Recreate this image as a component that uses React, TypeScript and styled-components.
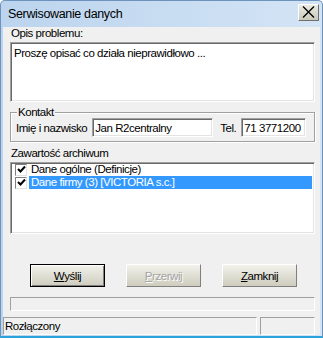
import styled, { createGlobalStyle } from 'styled-components';

const GlobalStyle = createGlobalStyle`
  html, body { margin: 0; padding: 0; background: #ffffff; }
  body {
    font-family: "Liberation Sans", Arial, sans-serif;
    font-size: 11.5px;
    letter-spacing: -0.45px;
    color: #000;
  }
`;

const Window = styled.div`
  width: 323px;
  height: 338px;
  box-sizing: border-box;
  display: flex;
  flex-direction: column;
  background: linear-gradient(to right, #bcd4ee, #d3e4f5);
  border: 1px solid #6d93bd;
  border-bottom: 2px solid #2aa3dc;
  border-radius: 5px 5px 0 0;
  padding: 0 2px 1px;
`;

const TitleBar = styled.div`
  height: 26px;
  display: flex;
  align-items: center;
  justify-content: space-between;
  padding-left: 5px;
  font-size: 12.5px;
  letter-spacing: -0.35px;
`;

const CloseButton = styled.div`
  width: 21px;
  height: 17px;
  box-sizing: border-box;
  margin-right: 1px;
  margin-top: -4px;
  display: flex;
  align-items: center;
  justify-content: center;
  background: linear-gradient(#ecebe4, #c9c8b9);
  border: 1px solid;
  border-color: #ffffff #6f6f6f #6f6f6f #ffffff;
`;

const Client = styled.div`
  flex: 1;
  background: #f0f0f0;
  display: flex;
  flex-direction: column;
  padding: 0 5px 0 7px;
`;

const Label = styled.div<{ $top?: number }>`
  line-height: 13px;
  height: 13px;
  margin-top: ${p => p.$top ?? 0}px;
  padding-left: 1px;
  white-space: nowrap;
`;

const Sunken = styled.div`
  box-sizing: border-box;
  background: #fff;
  border: 1px solid;
  border-color: #a0a0a0 #ffffff #ffffff #a0a0a0;
  box-shadow: inset 1px 1px 0 #696969, inset -1px -1px 0 #e3e3e3;
`;

const TextArea = styled(Sunken)`
  margin-top: 2px;
  height: 60px;
  padding: 4px 3px;
  line-height: 13px;
`;

const GroupBox = styled.div`
  position: relative;
  margin-top: 10px;
  height: 30px;
  box-sizing: border-box;
  border: 1px solid #a0a0a0;
  box-shadow: 1px 1px 0 #ffffff, inset 1px 1px 0 #ffffff;
  padding: 5px 0 0 5px;
`;

const Legend = styled.span`
  position: absolute;
  left: 6px;
  top: -7px;
  padding: 0 1px;
  line-height: 13px;
  background: #f0f0f0;
`;

const FieldRow = styled.div`
  display: flex;
  align-items: center;
`;

const FieldLabel = styled.span<{ $gap: number }>`
  margin-right: ${p => p.$gap}px;
  white-space: nowrap;
`;

const Input = styled(Sunken)<{ $w: number; $after?: number }>`
  width: ${p => p.$w}px;
  height: 19px;
  line-height: 15px;
  padding: 2px 2px;
  margin-right: ${p => p.$after ?? 0}px;
  white-space: nowrap;
  overflow: hidden;
`;

const ListBox = styled(Sunken)`
  margin-top: 2px;
  height: 72px;
  padding: 0 2px 0 3px;
`;

const ListRow = styled.div`
  display: flex;
  align-items: center;
  height: 13px;
`;

const CheckBox = styled.div`
  width: 12px;
  height: 12px;
  box-sizing: border-box;
  margin-left: 1px;
  background: #fff;
  border: 1px solid;
  border-color: #808080 #e3e3e3 #e3e3e3 #808080;
  display: flex;
  align-items: center;
  justify-content: center;
`;

const ItemText = styled.div<{ $selected?: boolean }>`
  flex: 1;
  margin-left: 2px;
  padding-left: 2px;
  line-height: 13px;
  height: 13px;
  white-space: nowrap;
  background: ${p => (p.$selected ? '#3399ff' : 'transparent')};
  color: ${p => (p.$selected ? '#ffffff' : '#000000')};
`;

const ButtonRow = styled.div`
  display: flex;
  gap: 21px;
  margin-top: 30px;
  padding-left: 20px;
`;

const Button = styled.div<{ $default?: boolean; $disabled?: boolean }>`
  width: 75px;
  height: 23px;
  box-sizing: border-box;
  display: flex;
  align-items: center;
  justify-content: center;
  background: linear-gradient(#f2f2ec, #cdccbd);
  border: 1px solid;
  border-color: ${p => (p.$default ? '#000000' : '#ffffff #808080 #808080 #ffffff')};
  box-shadow: ${p => (p.$default ? 'inset 1px 1px 0 #fff, inset -1px -1px 0 #808080' : 'none')};
  color: ${p => (p.$disabled ? '#a3a3a3' : '#000000')};
  text-shadow: ${p => (p.$disabled ? '1px 1px 0 #ffffff' : 'none')};
  u { text-decoration: underline; }
`;

const Progress = styled.div`
  margin-top: 10px;
  height: 14px;
  box-sizing: border-box;
  border: 1px solid;
  border-color: #a0a0a0 #ffffff #ffffff #a0a0a0;
`;

const StatusBar = styled.div`
  display: flex;
  gap: 3px;
  margin-top: 6px;
  margin-left: -7px;
  height: 18px;
`;

const StatusPanel = styled.div<{ $w?: number }>`
  box-sizing: border-box;
  ${p => (p.$w ? `width: ${p.$w}px;` : 'flex: 1;')}
  border: 1px solid;
  border-color: #a0a0a0 #ffffff #ffffff #a0a0a0;
  padding-left: 1px;
  line-height: 16px;
  white-space: nowrap;
`;

const Check = () => (
  <svg width="9" height="9" viewBox="0 0 9 9">
    <path d="M1 4 L3.5 6.5 L8 1.5" fill="none" stroke="#000" strokeWidth="2" />
  </svg>
);

export default function App() {
  return (
    <>
      <GlobalStyle />
      <Window>
        <TitleBar>
          <span>Serwisowanie danych</span>
          <CloseButton>
            <svg width="13" height="12" viewBox="0 0 13 12">
              <path d="M1 0.5 L12 11.5 M12 0.5 L1 11.5" stroke="#000" strokeWidth="1.3" />
            </svg>
          </CloseButton>
        </TitleBar>
        <Client>
          <Label>Opis problemu:</Label>
          <TextArea>Proszę opisać co działa nieprawidłowo ...</TextArea>
          <GroupBox>
            <Legend>Kontakt</Legend>
            <FieldRow>
              <FieldLabel $gap={5}>Imię i nazwisko</FieldLabel>
              <Input $w={121} $after={7}>Jan R2centralny</Input>
              <FieldLabel $gap={5}>Tel.</FieldLabel>
              <Input $w={65}>71 3771200</Input>
            </FieldRow>
          </GroupBox>
          <Label $top={5}>Zawartość archiwum</Label>
          <ListBox>
            <ListRow>
              <CheckBox><Check /></CheckBox>
              <ItemText>Dane ogólne (Definicje)</ItemText>
            </ListRow>
            <ListRow>
              <CheckBox><Check /></CheckBox>
              <ItemText $selected>Dane firmy (3) [VICTORIA s.c.]</ItemText>
            </ListRow>
          </ListBox>
          <ButtonRow>
            <Button $default><u>W</u>yślij</Button>
            <Button $disabled><u>P</u>rzerwij</Button>
            <Button><u>Z</u>amknij</Button>
          </ButtonRow>
          <Progress />
          <StatusBar>
            <StatusPanel>Rozłączony</StatusPanel>
            <StatusPanel $w={55} />
          </StatusBar>
        </Client>
      </Window>
    </>
  );
}
